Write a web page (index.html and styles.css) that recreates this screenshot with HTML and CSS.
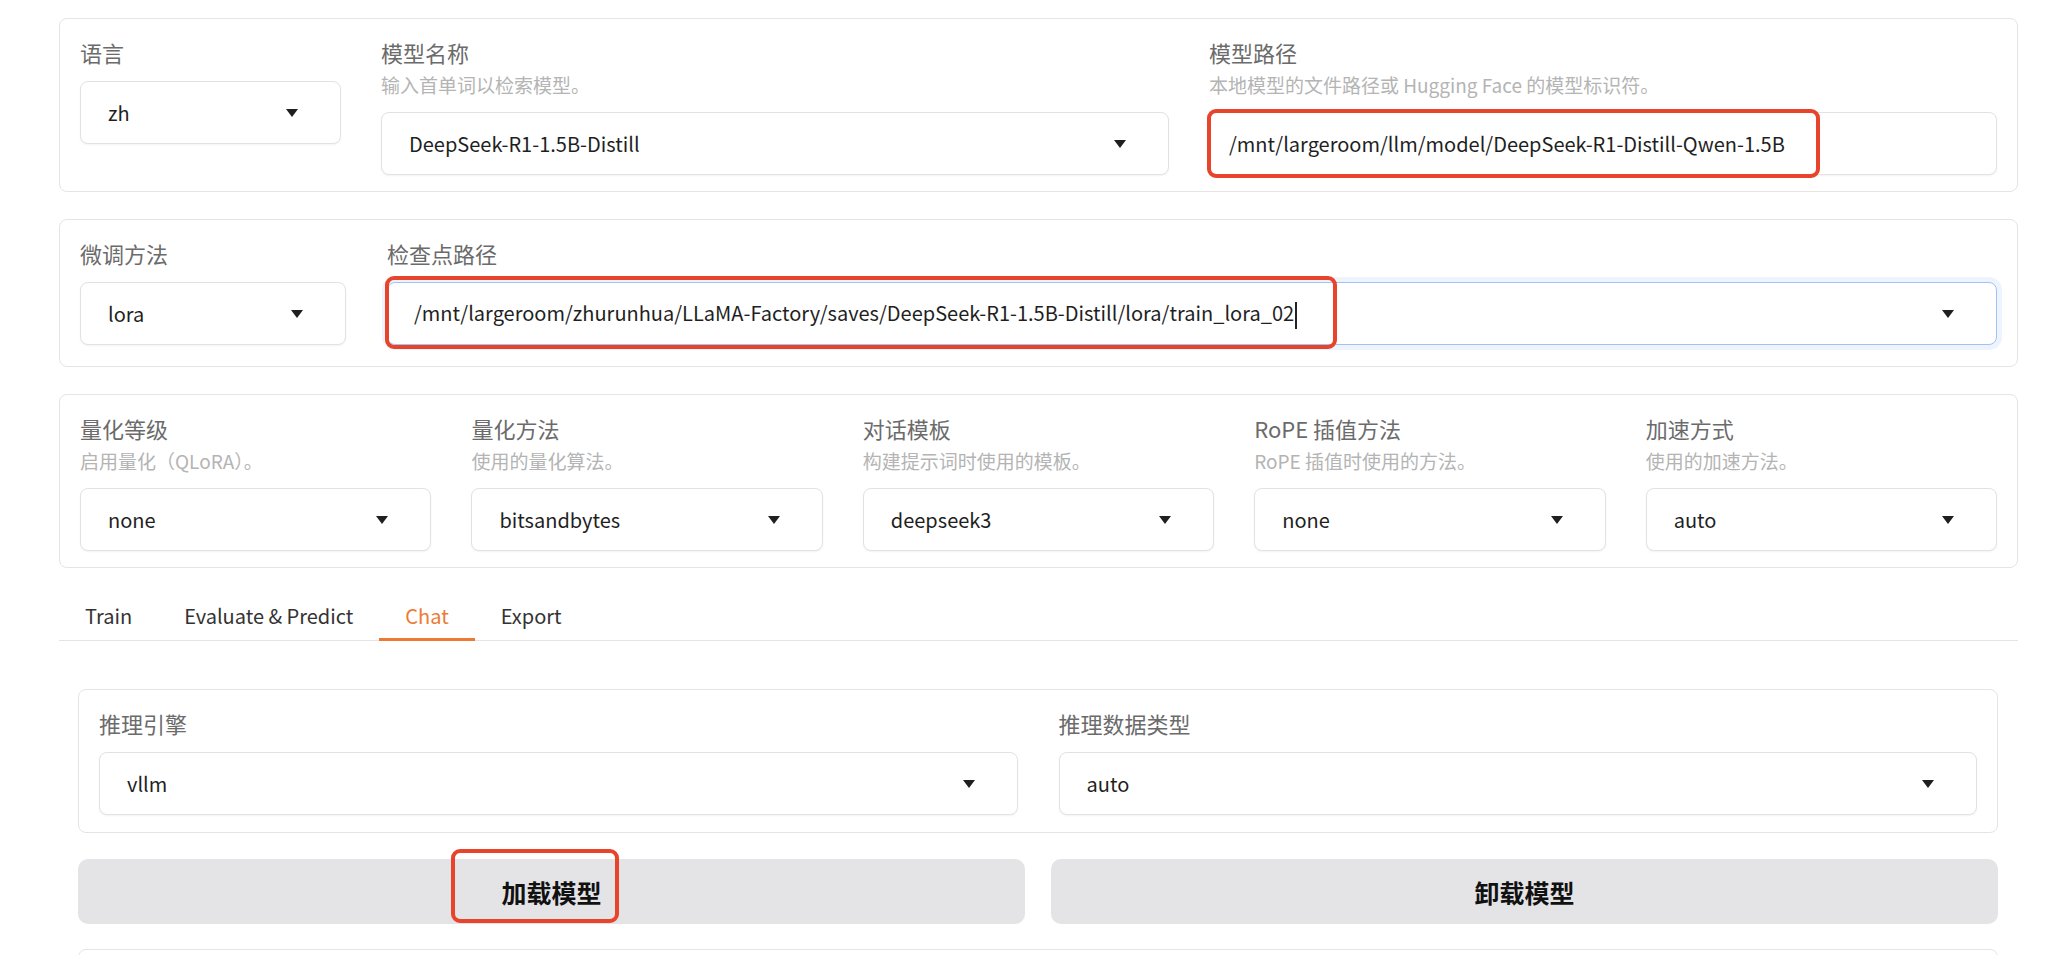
FILE: index.html
```html
<!DOCTYPE html>
<html lang="zh">
<head>
    <meta charset="UTF-8">
    <meta name="viewport" content="width=device-width, initial-scale=1.0">
    <title>LLaMA Board</title>
    <link rel="stylesheet" href="styles.css">
</head>
<body>
    <div class="panel top-row">
        <div class="field lang">
            <span class="label">语言</span>
            <div class="select"><span>zh</span><svg class="caret" viewBox="0 0 12 8"><path d="M0 0h12L6 8z"/></svg></div>
        </div>
        <div class="field grow">
            <span class="label">模型名称</span>
            <span class="info">输入首单词以检索模型。</span>
            <div class="select"><span>DeepSeek-R1-1.5B-Distill</span><svg class="caret" viewBox="0 0 12 8"><path d="M0 0h12L6 8z"/></svg></div>
        </div>
        <div class="field grow">
            <span class="label">模型路径</span>
            <span class="info">本地模型的文件路径或 Hugging Face 的模型标识符。</span>
            <div class="select textbox">
                <span>/mnt/largeroom/llm/model/DeepSeek-R1-Distill-Qwen-1.5B</span>
                <div class="mark mark-path"></div>
            </div>
        </div>
    </div>

    <div class="panel mid-row">
        <div class="field method">
            <span class="label">微调方法</span>
            <div class="select"><span>lora</span><svg class="caret" viewBox="0 0 12 8"><path d="M0 0h12L6 8z"/></svg></div>
        </div>
        <div class="field grow">
            <span class="label">检查点路径</span>
            <div class="select focus">
                <span>/mnt/largeroom/zhurunhua/LLaMA-Factory/saves/DeepSeek-R1-1.5B-Distill/lora/train_lora_02<i class="cursor"></i></span>
                <svg class="caret" viewBox="0 0 12 8"><path d="M0 0h12L6 8z"/></svg>
                <div class="mark mark-ckpt"></div>
            </div>
        </div>
    </div>

    <div class="panel quant-row">
        <div class="field grow">
            <span class="label">量化等级</span>
            <span class="info">启用量化（QLoRA）。</span>
            <div class="select"><span>none</span><svg class="caret" viewBox="0 0 12 8"><path d="M0 0h12L6 8z"/></svg></div>
        </div>
        <div class="field grow">
            <span class="label">量化方法</span>
            <span class="info">使用的量化算法。</span>
            <div class="select"><span>bitsandbytes</span><svg class="caret" viewBox="0 0 12 8"><path d="M0 0h12L6 8z"/></svg></div>
        </div>
        <div class="field grow">
            <span class="label">对话模板</span>
            <span class="info">构建提示词时使用的模板。</span>
            <div class="select"><span>deepseek3</span><svg class="caret" viewBox="0 0 12 8"><path d="M0 0h12L6 8z"/></svg></div>
        </div>
        <div class="field grow">
            <span class="label">RoPE 插值方法</span>
            <span class="info">RoPE 插值时使用的方法。</span>
            <div class="select"><span>none</span><svg class="caret" viewBox="0 0 12 8"><path d="M0 0h12L6 8z"/></svg></div>
        </div>
        <div class="field grow">
            <span class="label">加速方式</span>
            <span class="info">使用的加速方法。</span>
            <div class="select"><span>auto</span><svg class="caret" viewBox="0 0 12 8"><path d="M0 0h12L6 8z"/></svg></div>
        </div>
    </div>

    <div class="tabs">
        <div class="tab">Train</div>
        <div class="tab">Evaluate &amp; Predict</div>
        <div class="tab active">Chat</div>
        <div class="tab">Export</div>
    </div>

    <section class="tab-body">
        <div class="panel chat-row">
            <div class="field grow">
                <span class="label">推理引擎</span>
                <div class="select"><span>vllm</span><svg class="caret" viewBox="0 0 12 8"><path d="M0 0h12L6 8z"/></svg></div>
            </div>
            <div class="field grow">
                <span class="label">推理数据类型</span>
                <div class="select"><span>auto</span><svg class="caret" viewBox="0 0 12 8"><path d="M0 0h12L6 8z"/></svg></div>
            </div>
        </div>
        <div class="buttons">
            <button>加载模型<span class="mark mark-btn"></span></button>
            <button>卸载模型</button>
        </div>
        <div class="panel bottom-panel"></div>
    </section>
</body>
</html>
```

FILE: styles.css
```css
*{
    margin: 0;
    padding: 0;
    box-sizing: border-box;
}
body{
    font-family: "Noto Sans CJK SC", "Noto Sans", sans-serif;
    background: #fff;
    color: #1f1f1f;
    padding: 18px 30px 0 59px;
    overflow: hidden;
    height: 955px;
}

.panel{
    border: 1px solid #e4e4e4;
    border-radius: 8px;
    padding: 18px 20px 16px;
    display: flex;
    gap: 40px;
    align-items: flex-start;
    margin-bottom: 27px;
}
.mid-row{
    padding-bottom: 21px;
    gap: 41px;
}

.field{
    display: flex;
    flex-direction: column;
}
.grow{
    flex: 1;
    min-width: 0;
}
.lang{
    width: 261px;
}
.method{
    width: 266px;
}

.label{
    font-size: 22px;
    line-height: 30px;
    color: #6b6b6b;
}
.info{
    font-size: 19px;
    line-height: 26px;
    color: #b4b4b4;
    margin-top: 5px;
}

.select{
    position: relative;
    height: 63px;
    margin-top: 14px;
    border: 1px solid #e2e2e2;
    border-radius: 8px;
    background: #fff;
    box-shadow: 0 1px 2px rgba(0,0,0,0.05);
    display: flex;
    align-items: center;
    justify-content: space-between;
    padding: 0 42px 0 27px;
    font-size: 20px;
    white-space: nowrap;
}
.textbox{
    padding-left: 19px;
}
.select.focus{
    border-color: #9ec3f4;
    box-shadow: 0 0 0 5px #edf4fd;
    padding-left: 26px;
}
.caret{
    width: 12px;
    height: 8px;
    fill: #1f1f1f;
    flex: none;
}
.cursor{
    display: inline-block;
    width: 2px;
    height: 27px;
    background: #222;
    margin-left: 1px;
    vertical-align: middle;
}

/* red annotation frames drawn over the screenshot */
.mark{
    position: absolute;
    border: 4px solid #e8432b;
    border-radius: 9px;
    pointer-events: none;
}
.mark-path{
    left: -3px;
    top: -4px;
    width: 613px;
    height: 69px;
}
.mark-ckpt{
    left: -3px;
    top: -7px;
    width: 952px;
    height: 73px;
}
.mark-btn{
    left: 373px;
    top: -10px;
    width: 168px;
    height: 74px;
}

.tabs{
    display: flex;
    border-bottom: 1px solid #e4e4e4;
}
.tab{
    font-size: 20px;
    line-height: 30px;
    color: #333;
    padding: 6px 26px 7px;
    border-bottom: 3px solid transparent;
    margin-bottom: -1px;
}
.tab.active{
    color: #ec7a35;
    border-bottom-color: #ec7a35;
}

.tab-body{
    padding: 48px 20px 0 19px;
}
.chat-row{
    padding: 18px 20px 17px;
    gap: 41px;
    margin-bottom: 26px;
}

.buttons{
    display: flex;
    gap: 26px;
    margin-bottom: 25px;
}
button{
    position: relative;
    flex: 1;
    height: 65px;
    border: 0;
    border-radius: 10px;
    background: #e4e4e7;
    font-family: "Noto Sans CJK SC", sans-serif;
    font-size: 25px;
    font-weight: 700;
    color: #111;
}
.bottom-panel{
    height: 120px;
}
```
